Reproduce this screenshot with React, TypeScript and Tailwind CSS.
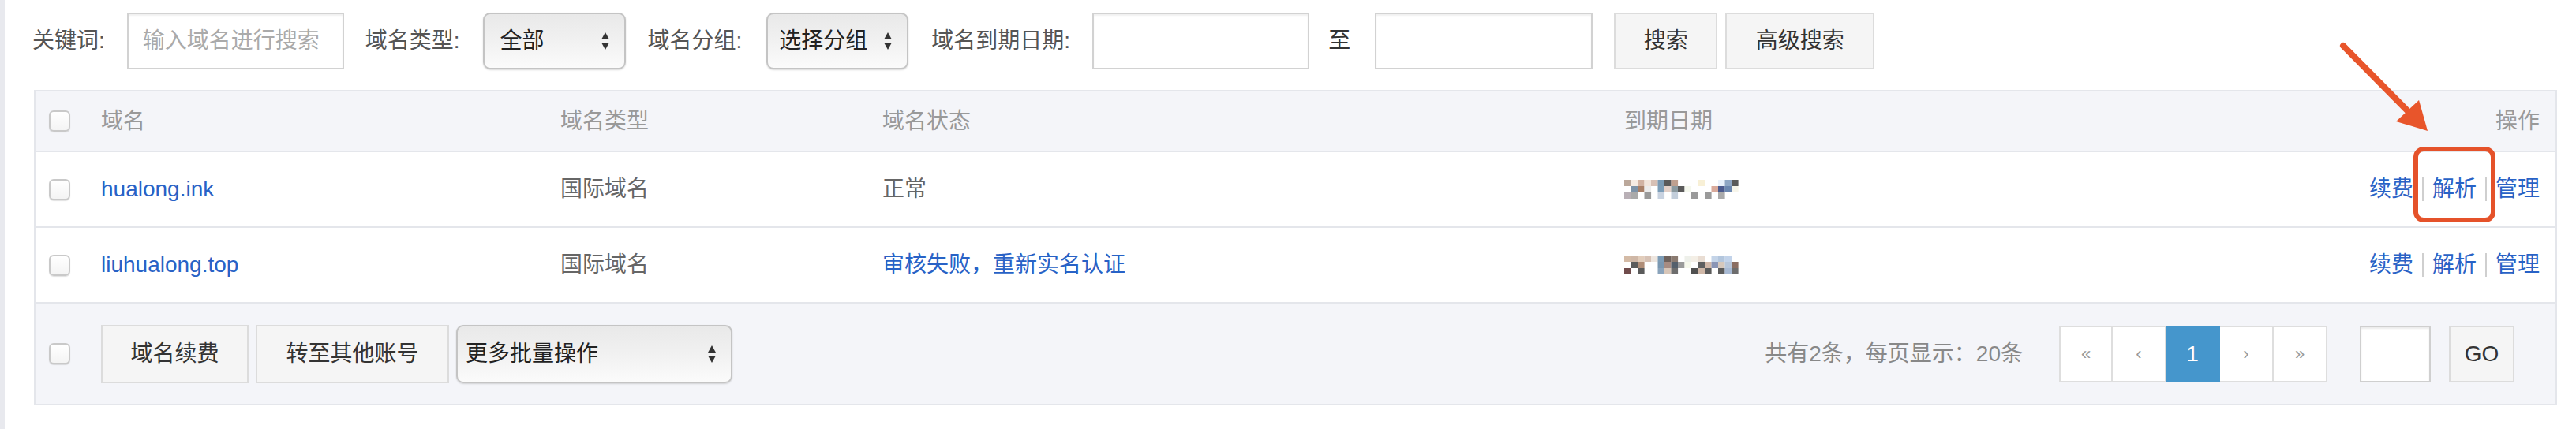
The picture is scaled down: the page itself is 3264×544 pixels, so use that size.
import React from "react";

const font = { fontFamily: '"Liberation Sans", "Noto Sans CJK SC", sans-serif' };

const Checkbox = () => (
  <div className="h-[27px] w-[27px] rounded-[6px] border-2 border-[#c9c9c9] bg-gradient-to-b from-white to-[#f4f4f4] shadow-[0_1px_1px_rgba(0,0,0,0.12)]" />
);

const SelectArrows = () => (
  <svg width="12" height="26" viewBox="0 0 12 26" className="shrink-0">
    <path d="M6 2 L11 11 L1 11 Z" fill="#333" />
    <path d="M6 24 L11 15 L1 15 Z" fill="#333" />
  </svg>
);

const FakeSelect = ({ label, className }: { label: string; className: string }) => (
  <div
    className={`flex items-center justify-between rounded-[9px] border-2 border-[#c4c4c4] bg-gradient-to-b from-[#e9e9e9] via-[#f1f1f1] to-[#fbfbfb] pr-[18px] text-[28px] text-[#222] shadow-[0_1px_2px_rgba(0,0,0,0.15)] ${className}`}
  >
    <span>{label}</span>
    <SelectArrows />
  </div>
);

const GrayButton = ({ label, className }: { label: string; className: string }) => (
  <div
    className={`flex items-center justify-center border-2 border-[#dcdcdc] bg-[#f5f5f5] text-[28px] text-[#333] ${className}`}
  >
    {label}
  </div>
);

// pixelated (blurred out) date cells
const mosaics: string[][][] = [
  [
    ["#bba89b", "#f5ebe3", "#d1b3a3", "#f1e5dc", "#d7c0b5", "#7b9bb5", "#5a5a5a", "#bfa08f", "", "", "", "#f8f0d6", "", "", "#e9f1fb", "#8ea6c4", "#5a5a5a"],
    ["", "#7d93a8", "#a88068", "#ececec", "", "#7c9db8", "#e3d0c8", "#8b9aa0", "#5a5a5a", "#f5f8ee", "", "", "", "#d9aa9b", "#4c5a8e", "#6b87b0", "#f7f5ea"],
    ["#b9b0b6", "#aaaaaa", "", "#9a9a9a", "", "#c8d2e0", "", "#c3cedb", "", "", "#9a9a9a", "", "#9a9a9a", "", "#aaaaaa", "", ""],
  ],
  [
    ["#d4bba6", "#cfb7a6", "#e2cdbb", "#d7c2b5", "#eee6df", "#7d9cb6", "#6f625c", "#8a7a70", "", "#eef0ea", "#f4efe6", "#e9ddd3", "", "#c4d4e8", "#b3c6dd", "#c2d3ea", ""],
    ["", "#5c5c5c", "#b08e78", "", "", "#7a98b2", "#a78c82", "#55606c", "#9a9a9a", "#f6f8ec", "", "#5f5f5f", "#d2b8a8", "#8a95b5", "#d6c8bc", "#b7c6da", "#8b6e62"],
    ["#704c4c", "", "#5a5a5a", "", "", "#8aa3bb", "#d8c6b8", "#6d6d6d", "", "", "#505050", "#d0b8a8", "#5a5a5a", "", "#5c5c5c", "#a8bad4", "#6d6d6d"],
  ],
];

const Mosaic = ({ grid }: { grid: string[][] }) => (
  <svg width="146" height="24" viewBox="0 0 146 24">
    {grid.map((row, r) =>
      row.map((c, i) =>
        c ? <rect key={`${r}-${i}`} x={i * 8.5} y={r * 8} width="8.6" height="8" fill={c} /> : null,
      ),
    )}
  </svg>
);

const Links = () => (
  <div className="flex items-center text-[28px] text-[#2862c6]">
    <span>续费</span>
    <span className="mx-[11px] h-[30px] w-[2px] bg-[#cfcfcf]" />
    <span>解析</span>
    <span className="mx-[11px] h-[30px] w-[2px] bg-[#cfcfcf]" />
    <span>管理</span>
  </div>
);

const rows = [
  { name: "hualong.ink", status: "正常", statusBlue: false, mosaic: mosaics[0] },
  { name: "liuhualong.top", status: "审核失败，重新实名认证", statusBlue: true, mosaic: mosaics[1] },
];

const pager = ["«", "‹", "1", "›", "»"];

export default function App() {
  return (
    <div className="relative flex h-[544px] w-[3264px] overflow-hidden bg-white" style={font}>
      <div className="w-[6px] shrink-0 bg-[#e8e9ee]" />

      <div className="flex flex-1 flex-col pt-[16px]">
        {/* search bar */}
        <div className="flex h-[72px] items-center pl-[35px] text-[28px] text-[#555]">
          <span>关键词:</span>
          <div className="ml-[28px] flex h-full w-[275px] items-center border-2 border-[#d2d2d2] pl-[18px] text-[#aaa] shadow-[inset_0_2px_2px_rgba(0,0,0,0.06)]">
            输入域名进行搜索
          </div>
          <span className="ml-[27px]">域名类型:</span>
          <FakeSelect label="全部" className="ml-[29px] h-full w-[181px] pl-[20px]" />
          <span className="ml-[28px]">域名分组:</span>
          <FakeSelect label="选择分组" className="ml-[31px] h-full w-[180px] pl-[14px]" />
          <span className="ml-[29px]">域名到期日期:</span>
          <div className="ml-[28px] h-full w-[275px] border-2 border-[#d2d2d2] shadow-[inset_0_2px_2px_rgba(0,0,0,0.06)]" />
          <span className="ml-[24px] text-[#333]">至</span>
          <div className="ml-[31px] h-full w-[276px] border-2 border-[#d2d2d2] shadow-[inset_0_2px_2px_rgba(0,0,0,0.06)]" />
          <GrayButton label="搜索" className="ml-[27px] h-full w-[131px]" />
          <GrayButton label="高级搜索" className="ml-[10px] h-full w-[189px]" />
        </div>

        {/* table */}
        <div className="mr-[24px] ml-[37px] mt-[26px] border-2 border-[#e4e6eb]">
          <div className="flex h-[77px] items-center border-b-2 border-[#e4e6eb] bg-[#f4f5f9] text-[28px] text-[#999]">
            <div className="w-[83px] pl-[17px]">
              <Checkbox />
            </div>
            <div className="w-[582px]">域名</div>
            <div className="w-[408px]">域名类型</div>
            <div className="w-[940px]">域名状态</div>
            <div className="flex-1">到期日期</div>
            <div className="pr-[20px]">操作</div>
          </div>

          {rows.map((row) => (
            <div key={row.name} className="flex h-[96px] items-center border-b-2 border-[#e4e6eb] text-[28px] text-[#666]">
              <div className="w-[83px] pl-[17px]">
                <Checkbox />
              </div>
              <div className="w-[582px] text-[#2862c6]">{row.name}</div>
              <div className="w-[408px]">国际域名</div>
              <div className={`w-[940px] ${row.statusBlue ? "text-[#2862c6]" : ""}`}>{row.status}</div>
              <div className="flex-1">
                <Mosaic grid={row.mosaic} />
              </div>
              <div className="pr-[20px]">
                <Links />
              </div>
            </div>
          ))}

          <div className="flex h-[127px] items-center bg-[#f4f5f9] text-[28px]">
            <div className="w-[83px] pl-[17px]">
              <Checkbox />
            </div>
            <GrayButton label="域名续费" className="h-[74px] w-[187px]" />
            <GrayButton label="转至其他账号" className="ml-[9px] h-[74px] w-[245px]" />
            <FakeSelect label="更多批量操作" className="ml-[9px] h-[74px] w-[350px] pl-[10px]" />
            <div className="flex-1" />
            <span className="text-[#888]">共有2条，每页显示：20条</span>
            <div className="ml-[46px] flex h-[72px]">
              {pager.map((p, i) => (
                <div
                  key={i}
                  className={`flex w-[68px] items-center justify-center border-y-2 text-[22px] ${
                    i === 0 ? "border-l-2" : ""
                  } border-r-2 ${
                    p === "1"
                      ? "border-[#4596cc] bg-[#4596cc] text-[28px] text-white"
                      : "border-[#dedede] bg-white text-[#999]"
                  }`}
                >
                  {p}
                </div>
              ))}
            </div>
            <div className="ml-[41px] h-[72px] w-[90px] border-2 border-[#cfcfcf] bg-white shadow-[inset_0_2px_2px_rgba(0,0,0,0.08)]" />
            <GrayButton label="GO" className="ml-[23px] h-[72px] w-[83px]" />
            <div className="w-[52px]" />
          </div>
        </div>
      </div>

      {/* annotation overlay */}
      <svg className="pointer-events-none absolute left-0 top-0" width="3264" height="544" viewBox="0 0 3264 544">
        <line x1="2969" y1="58" x2="3050" y2="140" stroke="#e8552b" strokeWidth="8" strokeLinecap="round" />
        <path d="M3076 166 L3036 154 L3065 127 Z" fill="#e8552b" />
        <rect x="3061" y="189" width="98" height="90" rx="10" fill="none" stroke="#e5522a" strokeWidth="6" />
      </svg>
    </div>
  );
}
